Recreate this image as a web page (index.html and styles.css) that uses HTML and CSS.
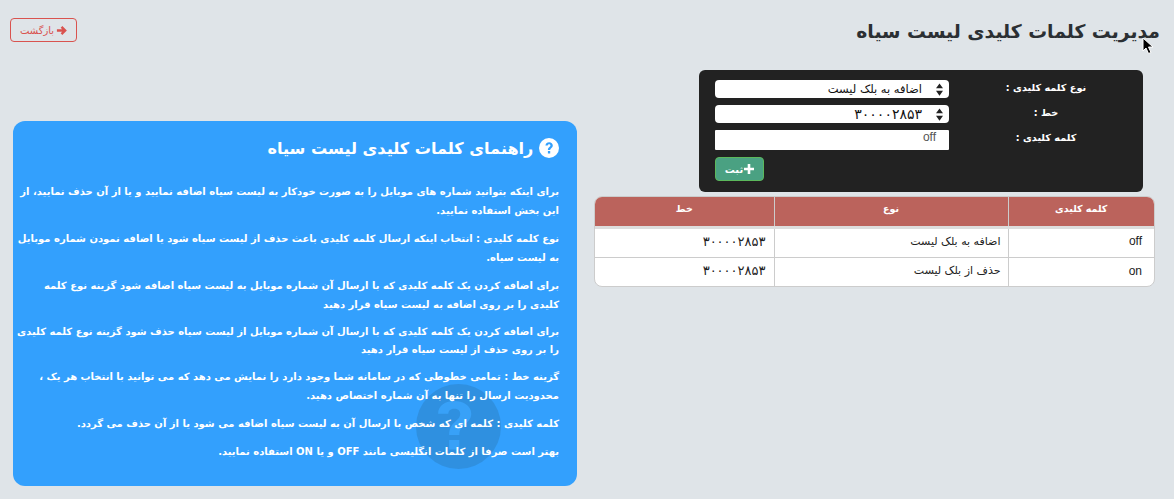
FILE: index.html
```html
<!DOCTYPE html>
<html lang="fa" dir="rtl">
<head>
<meta charset="utf-8">
<title>مدیریت کلمات کلیدی لیست سیاه</title>
<link rel="stylesheet" href="styles.css">
</head>
<body>
<header class="top">
  <h1 class="title">مدیریت کلمات کلیدی لیست سیاه</h1>
  <a class="back" href="#"><svg class="back-icon" viewBox="0 0 12 12"><path d="M1 6h8M6 2l4 4-4 4" fill="none" stroke="currentColor" stroke-width="2.6"/></svg>بازگشت</a>
</header>
<main class="columns">
  <section class="left-col">
    <form class="panel">
      <div class="row"><label class="lbl">نوع کلمه کلیدی :</label>
        <div class="sel"><svg class="updown" viewBox="0 0 8 14"><path d="M4 0l4 5.500H0zM4 14l4-5.500H0z"/></svg><span>اضافه به بلک لیست</span></div></div>
      <div class="row"><label class="lbl">خط :</label>
        <div class="sel"><svg class="updown" viewBox="0 0 8 14"><path d="M4 0l4 5.500H0zM4 14l4-5.500H0z"/></svg><span class="digits-lg">۳۰۰۰۰۲۸۵۳</span></div></div>
      <div class="row"><label class="lbl">کلمه کلیدی :</label>
        <div class="inp">off</div></div>
      <div class="row btn-row"><span class="lbl"></span><div class="btn-cell"><button class="save" type="button"><svg class="plus" viewBox="0 0 10 10"><path d="M5 0v10M0 5h10" stroke="#fff" stroke-width="2.6"/></svg>ثبت</button></div></div>
    </form>
    <div class="table-wrap">
      <table class="tbl">
        <thead><tr><th class="c1">کلمه کلیدی</th><th class="c2">نوع</th><th>خط</th></tr></thead>
        <tbody>
          <tr><td class="c1 latin">off</td><td class="c2">اضافه به بلک لیست</td><td class="digits">۳۰۰۰۰۲۸۵۳</td></tr>
          <tr><td class="c1 latin">on</td><td class="c2">حذف از بلک لیست</td><td class="digits">۳۰۰۰۰۲۸۵۳</td></tr>
        </tbody>
      </table>
    </div>
  </section>
  <section class="help">
    <svg class="watermark" viewBox="0 0 100 100"><circle cx="50" cy="50" r="50" fill="#2b7fc4" opacity=".5"/><path d="M26 35c0-10 9-15 19-15s20 5 20 15c0 12-14 12-14 25H39c0-16 13-16 13-25 0-4-3-6-7-6-5 0-7 3-7 6zM39 66h12v11H39z" fill="#38a1f8"/></svg>
    <h2 class="help-title"><svg class="q" viewBox="0 0 20 20"><circle cx="10" cy="10" r="10" fill="#fff"/><path d="M6.400 7.600C6.600 5.400 8.200 4.200 10.200 4.200c2.100 0 3.600 1.300 3.600 3.200 0 2.500-2.600 2.600-2.600 4.700H8.900c0-3 2.500-3.200 2.500-4.600 0-.8-.6-1.300-1.300-1.300-.9 0-1.300.6-1.400 1.400zM8.900 13h2.300v2.400H8.900z" fill="#33a0fd"/></svg> راهنمای کلمات کلیدی لیست سیاه</h2>
    <p>برای اینکه بتوانید شماره های موبایل را به صورت خودکار به لیست سیاه اضافه نمایید و یا از آن حذف نمایید، از این بخش استفاده نمایید.</p>
    <p>نوع کلمه کلیدی : انتخاب اینکه ارسال کلمه کلیدی باعث حذف از لیست سیاه شود یا اضافه نمودن شماره موبایل به لیست سیاه.</p>
    <p>برای اضافه کردن یک کلمه کلیدی که با ارسال آن شماره موبایل به لیست سیاه اضافه شود گزینه نوع کلمه کلیدی را بر روی اضافه به لیست سیاه قرار دهید</p>
    <p class="tight">برای اضافه کردن یک کلمه کلیدی که با ارسال آن شماره موبایل از لیست سیاه حذف شود گزینه نوع کلمه کلیدی را بر روی حذف از لیست سیاه قرار دهید</p>
    <p>گزینه خط : تمامی خطوطی که در سامانه شما وجود دارد را نمایش می دهد که می توانید با انتخاب هر یک ، محدودیت ارسال را تنها به آن شماره اختصاص دهید.</p>
    <p>کلمه کلیدی : کلمه ای که شخص با ارسال آن به لیست سیاه اضافه می شود یا از آن حذف می گردد.</p>
    <p>بهتر است صرفا از کلمات انگلیسی مانند OFF و یا ON استفاده نمایید.</p>
  </section>
</main>
<svg class="cursor" viewBox="0 0 12 18"><path d="M1 1v13l3-3 2.500 5.500 2.500-1L6.500 10H11z" fill="#000" stroke="#fff" stroke-width="1"/></svg>
</body>
</html>
```

FILE: styles.css
```css
* { box-sizing: border-box; }
body {
  margin: 0;
  height: 499px;
  overflow: hidden;
  background: #dfe4e8;
  font-family: "DejaVu Sans", "Noto Sans", sans-serif;
  color: #222;
  position: relative;
}
.top {
  display: flex;
  justify-content: space-between;
  align-items: flex-start;
  padding: 18px 14px 0 10px;
  height: 70px;
}
.title {
  margin: 0;
  font-size: 18.800px;
  line-height: 28px;
  font-weight: 700;
  color: #2b2f33;
}
.back {
  width: 67px;
  height: 24px;
  display: flex;
  align-items: center;
  justify-content: center;
  gap: 2px;
  border: 1px solid #d9534f;
  border-radius: 4px;
  color: #d9534f;
  font-size: 10px;
  font-weight: 400;
  text-decoration: none;
}
.back-icon { width: 11px; height: 11px; flex: none; }
.columns {
  display: flex;
  padding: 0 19px 0 13px;
  justify-content: space-between;
  align-items: flex-start;
}
.left-col { width: 561px; }
.panel {
  width: 444px;
  height: 122px;
  margin: 0 12px 4px 0;
  background: #222;
  border-radius: 6px;
  padding: 10px 0 0 16px;
  color: #fff;
}
.row {
  display: flex;
  align-items: flex-start;
  margin-bottom: 7px;
}
.lbl {
  width: 194px;
  text-align: center;
  font-size: 9.700px;
  font-weight: 700;
  line-height: 16px;
  flex: none;
}
.sel {
  width: 234px;
  height: 18px;
  background: #fff;
  border-radius: 4px;
  color: #111;
  font-size: 11.500px;
  display: flex;
  align-items: center;
  gap: 14px;
  padding-right: 6px;
}
.digits-lg { font-size: 14px; }
.updown { width: 7px; height: 13px; fill: #222; flex: none; }
.inp {
  width: 234px;
  height: 20px;
  background: #fff;
  color: #555;
  font-family: "Liberation Sans", sans-serif;
  font-size: 12px;
  line-height: 15px;
  padding-right: 13px;
  text-align: right;
  border-radius: 1px;
}
.btn-row { margin: 0; }
.btn-cell { width: 234px; display: flex; justify-content: flex-end; }
.save {
  width: 49px;
  height: 24px;
  background: #4aa182;
  border: 1px solid #5cb85c;
  border-radius: 4px;
  color: #fff;
  font-family: inherit;
  font-size: 10px;
  font-weight: 700;
  display: flex;
  align-items: center;
  justify-content: center;
  gap: 1px;
  padding: 0;
}
.plus { width: 10px; height: 10px; }
.table-wrap {
  border: 1px solid #ccc;
  border-radius: 8px;
  overflow: hidden;
  background: #fff;
  height: 91px;
}
.tbl {
  width: 100%;
  border-collapse: collapse;
  table-layout: fixed;
  font-size: 11px;
}
.tbl th {
  background: #bb635c;
  color: #fff;
  height: 30px;
  font-size: 9.500px;
  font-weight: 700;
  padding: 0 0 5px;
  text-align: center;
  border-bottom: 3px solid #ddd;
  border-left: 1px solid #ccc;
}
.tbl td {
  height: 30px;
  padding: 0 16px 3px 10px;
  text-align: right;
  border-bottom: 1px solid #ccc;
  border-left: 1px solid #ccc;
  color: #222;
}
.tbl tr:last-child td { border-bottom: 0; }
.tbl tr > :last-child { border-left: 0; }
.tbl .c1 { width: 146px; }
.tbl .c2 { width: 234px; }
.tbl td.c1 { padding-right: 12px; }
.tbl td.c2 { padding-right: 7px; }
.tbl td:last-child { padding-right: 8px; }
.tbl td.digits { font-size: 13px; }
.tbl td.latin { font-family: "Liberation Sans", sans-serif; font-size: 12px; }
.help {
  width: 564px;
  height: 365px;
  margin-top: 51px;
  background: #33a0fd;
  border-radius: 12px;
  padding: 15px 18px 0 3px;
  color: #fff;
  position: relative;
  overflow: hidden;
}
.help-title {
  margin: 0 0 20px;
  font-size: 16.100px;
  line-height: 26px;
  font-weight: 700;
}
.q { width: 20px; height: 20px; vertical-align: -4px; }
.help p {
  margin: 0 0 9px;
  font-size: 10px;
  line-height: 19px;
  font-weight: 700;
  position: relative;
}
.help p.tight { line-height: 18px; margin-bottom: 8px; }
.watermark {
  position: absolute;
  left: 403px;
  top: 263px;
  width: 85px;
  height: 85px;
}
.cursor {
  position: absolute;
  left: 1142px;
  top: 37px;
  width: 12px;
  height: 18px;
}
```
